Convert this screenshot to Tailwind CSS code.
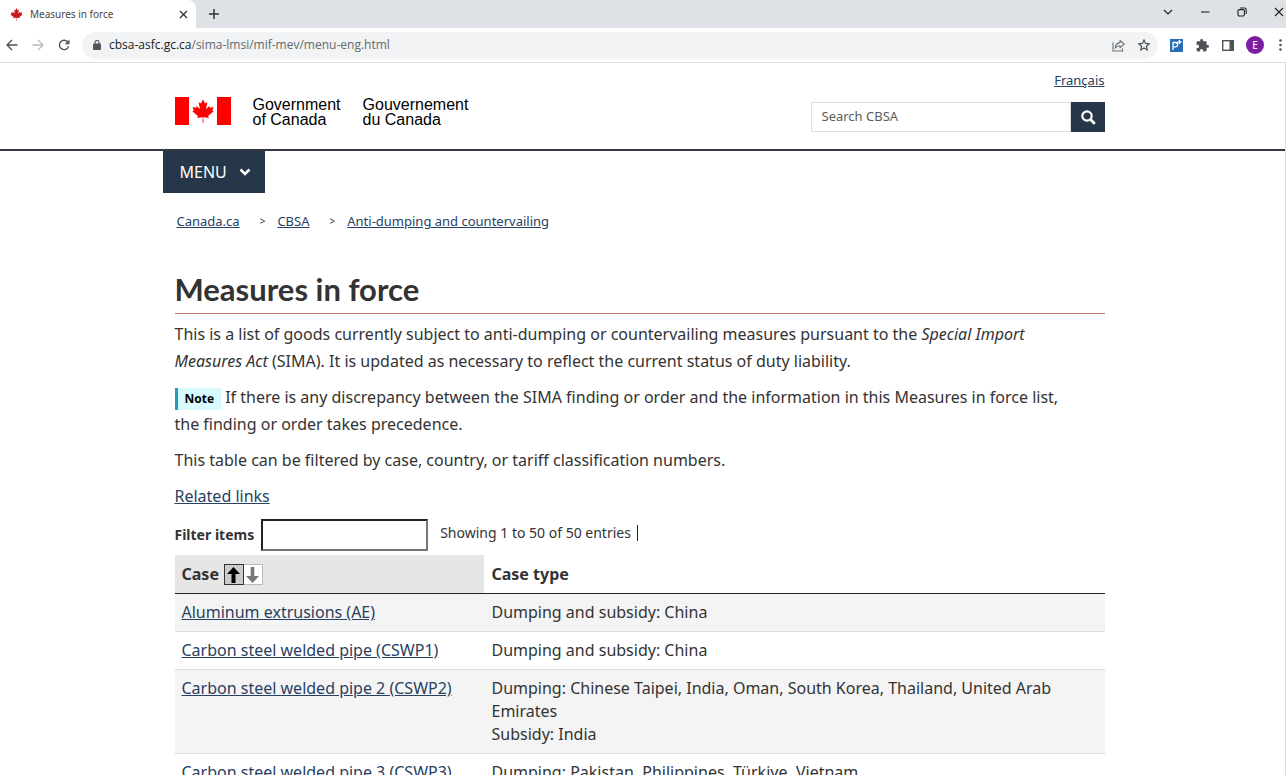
<!DOCTYPE html>
<html lang="en">
<head>
<meta charset="utf-8">
<meta name="viewport" content="width=device-width, initial-scale=1">
<title>Measures in force</title>
<script src="https://cdn.jsdelivr.net/npm/@tailwindcss/browser@4"></script>
</head>
<body class="flex h-screen flex-col overflow-hidden bg-white font-['Noto_Sans',sans-serif] text-[#333]">

<svg class="hidden" aria-hidden="true">
  <symbol id="leaf" viewBox="2900 370 3800 4080"><path d="M4890 4430l-45-863a95 95 0 0 1 111-98l859 151-116-320a65 65 0 0 1 20-73l941-762-212-99a65 65 0 0 1-34-79l186-572-542 115a65 65 0 0 1-73-38l-105-247-423 454a65 65 0 0 1-111-57l204-1052-327 189a65 65 0 0 1-91-27l-332-652-332 652a65 65 0 0 1-91 27l-327-189 204 1052a65 65 0 0 1-111 57l-423-454-105 247a65 65 0 0 1-73 38l-542-115 186 572a65 65 0 0 1-34 79l-212 99 941 762a65 65 0 0 1 20 73l-116 320 859-151a95 95 0 0 1 111 98l-45 863z"/></symbol>
</svg>

<!-- Browser window -->
<div class="shrink-0 border-b border-[#dcdde0]">
  <div class="flex h-7 items-center bg-[#dee1e6] text-[#333]">
    <div class="flex h-7 w-[196px] items-center rounded-tr-lg bg-white pr-1 pl-[10px]">
      <svg class="h-[13px] w-[13px] fill-[#c8191e]" aria-hidden="true"><use href="#leaf"/></svg>
      <span class="ml-[7px] flex-1 text-[10px] text-[#45474a]">Measures in force</span>
      <button class="p-1" aria-label="Close tab"><svg class="size-[9px]" viewBox="0 0 9 9" fill="none" stroke="#333" stroke-width="1.3"><path d="M1 1l7 7M8 1L1 8"/></svg></button>
    </div>
    <button class="ml-3" aria-label="New tab"><svg class="size-3" viewBox="0 0 12 12" fill="none" stroke="#333" stroke-width="1.5"><path d="M6 1v10M1 6h10"/></svg></button>
    <div class="ml-auto flex h-full items-center gap-[27px] pr-0.5 pb-1">
      <button aria-label="Search tabs"><svg class="size-[10px]" viewBox="0 0 10 10" fill="none" stroke="#222" stroke-width="1.2"><path d="M1 3l4 4 4-4"/></svg></button>
      <button aria-label="Minimize"><svg class="size-[10px]" viewBox="0 0 10 10" fill="none" stroke="#222" stroke-width="1.1"><path d="M1 5h8.500"/></svg></button>
      <button aria-label="Restore"><svg class="size-[10px]" viewBox="0 0 10 10" fill="none" stroke="#222" stroke-width="1.1"><rect x="1" y="2.600" width="6.400" height="6.400" rx="1.200"/><path d="M3 1h4.500a1.700 1.700 0 0 1 1.700 1.700V7"/></svg></button>
      <button aria-label="Close"><svg class="size-[10px]" viewBox="0 0 10 10" fill="none" stroke="#222" stroke-width="1.1"><path d="M1 1l8 8M9 1L1 9"/></svg></button>
    </div>
  </div>
  <div class="flex h-[34px] items-center bg-white pl-[6px]">
    <button aria-label="Back"><svg class="size-3" viewBox="0 0 12 12" fill="none" stroke="#505357" stroke-width="1.4"><path d="M11.500 6H1.200M6 1L1 6l5 5"/></svg></button>
    <button class="ml-[14px]" aria-label="Forward"><svg class="size-3" viewBox="0 0 12 12" fill="none" stroke="#b9bbbe" stroke-width="1.300"><path d="M.5 6h10.300M6 1l5 5-5 5"/></svg></button>
    <button class="ml-[14px]" aria-label="Reload"><svg class="size-3" viewBox="0 0 12 12"><path d="M10 3.200A4.700 4.700 0 1 0 10.600 7.400" fill="none" stroke="#505357" stroke-width="1.400"/><path d="M11.500.5v4.800H6.700z" fill="#505357"/></svg></button>
    <div class="ml-3 flex h-[27px] flex-1 items-center rounded-full bg-[#f1f3f4] pr-2 pl-[11px]">
      <svg class="h-[10px] w-2" viewBox="0 0 8 10"><rect y="3.500" width="8" height="6.500" rx="1" fill="#505357"/><path d="M2 4V2.500a2 2 0 0 1 4 0V4" fill="none" stroke="#505357" stroke-width="1.100"/></svg>
      <span class="ml-2 flex-1 font-['Open_Sans',sans-serif] text-xs text-[#66696d]"><span class="text-[#222]">cbsa-asfc.gc.ca</span>/sima-lmsi/mif-mev/menu-eng.html</span>
      <button aria-label="Share"><svg class="size-[13px]" viewBox="0 0 13 13" fill="none" stroke="#6a6d71" stroke-width="1.100"><path d="M1 3.500v8.500h9.500V9.500"/><path d="M8 1.500l4.300 3.700L8 8.800V6.700C5.500 6.700 4.300 7.500 3.200 9.200 3.500 6.200 5 4 8 3.600z" stroke-linejoin="round"/></svg></button>
      <button class="ml-[13px]" aria-label="Bookmark"><svg class="size-3" viewBox="0 0 12 12" fill="none" stroke="#505357" stroke-width="1.200"><path d="M6 1l1.500 3.400 3.700.4-2.800 2.400.8 3.700L6 9l-3.200 1.900.8-3.700L.8 4.800l3.700-.4z"/></svg></button>
    </div>
    <button class="ml-3" aria-label="Extension"><svg class="size-[13px]" viewBox="0 0 13 13"><path d="M0 0h13v13H0z" fill="#2a6cb4"/><path d="M3 11V3.500h2.500a2 2 0 0 1 0 4.300H3M9.500 1v4M7.500 3h4" fill="none" stroke="#fff" stroke-width="1.300"/></svg></button>
    <button class="ml-[13px]" aria-label="Extensions"><svg class="size-[13px]" viewBox="1 1 22 22" fill="#505357"><path d="M20.500 11H19V7c0-1.100-.9-2-2-2h-4V3.500a2.500 2.500 0 0 0-5 0V5H4c-1.100 0-2 .9-2 2v3.800h1.500a2.700 2.700 0 0 1 0 5.400H2V20c0 1.100.9 2 2 2h3.800v-1.500a2.700 2.700 0 0 1 5.400 0V22H17c1.100 0 2-.9 2-2v-4h1.500a2.500 2.500 0 0 0 0-5z"/></svg></button>
    <button class="ml-[13px]" aria-label="Side panel"><svg class="h-[11px] w-3" viewBox="0 0 12 11"><rect x=".7" y=".7" width="10.600" height="9.600" fill="none" stroke="#505357" stroke-width="1.400"/><path d="M7.500 0H12v11H7.500z" fill="#505357"/></svg></button>
    <button class="ml-3 flex size-[18px] items-center justify-center rounded-full bg-[#7b1fa2] text-[10px] text-white">E</button>
    <button class="mr-1 ml-[15px]" aria-label="More"><svg class="h-3 w-[3px]" viewBox="0 0 3 12" fill="#505357"><circle cx="1.500" cy="1.500" r="1.300"/><circle cx="1.500" cy="6" r="1.300"/><circle cx="1.500" cy="10.500" r="1.300"/></svg></button>
  </div>
</div>

<div class="min-h-0 flex-1 overflow-hidden border-r border-[#dcdcdc]">
  <header class="border-b-2 border-[#383745] pr-1.5">
    <div class="mx-auto flex h-[86px] max-w-[930px] justify-between">
      <a href="#" class="flex items-start pt-[34px] font-['Liberation_Sans',sans-serif] text-base leading-[15px] font-normal text-black">
        <svg class="h-7 w-14" viewBox="0 0 56 28" fill="#f00" aria-hidden="true"><path d="M0 0h14v28H0zM42 0h14v28H42z"/><use href="#leaf" x="17" y="2" width="22" height="24"/></svg>
        <span class="ml-[22px]">Government<br>of Canada</span>
        <span class="ml-[22px]">Gouvernement<br>du Canada</span>
      </a>
      <div class="flex flex-col items-end pt-[7px]">
        <a href="#" class="text-[13px] leading-5 text-[#284162] underline">Français</a>
        <form class="mt-3 flex h-[30px]">
          <input type="search" aria-label="Search CBSA" placeholder="Search CBSA" class="w-[260px] border border-[#ddd] px-[10px] text-[13px] placeholder:text-[#5c5c5c]">
          <button type="button" class="flex w-[34px] items-center justify-center bg-[#26374a]" aria-label="Search"><svg class="size-4" viewBox="0 0 16 16" fill="none" stroke="#fff"><circle cx="7" cy="7" r="4.700" stroke-width="2.200"/><path d="M10.500 10.500l3.500 3.500" stroke-width="2.800" stroke-linecap="round"/></svg></button>
        </form>
      </div>
    </div>
  </header>

  <div class="pr-1.5">
    <div class="mx-auto max-w-[930px]">
      <nav>
        <button class="-ml-3 flex h-[42px] w-[102px] items-center bg-[#26374a] pl-[17px] text-base text-white">MENU<svg class="ml-3 h-2 w-3" viewBox="0 0 12 8" fill="none" stroke="#fff" stroke-width="2.600"><path d="M1.500 1.500L6 6l4.500-4.500"/></svg></button>
        <ol class="mt-[18px] flex items-center pl-[2px] text-[13px] leading-5 text-[#284162]">
          <li><a href="#" class="underline">Canada.ca</a></li>
          <li class="flex items-center"><span class="mr-3 ml-5 text-[10px] text-[#333]">&gt;</span><a href="#" class="underline">CBSA</a></li>
          <li class="flex items-center"><span class="mr-3 ml-5 text-[10px] text-[#333]">&gt;</span><a href="#" class="underline">Anti-dumping and countervailing</a></li>
        </ol>
      </nav>
      <main class="text-base leading-[27px]">
        <h1 class="mt-[39px] border-b border-[#c4716f] pb-1 font-['Lato',sans-serif] text-[31px] leading-[39px] font-bold">Measures in force</h1>
        <p class="mt-[7px] pr-6">This is a list of goods currently subject to anti-dumping or countervailing measures pursuant to the <i>Special Import Measures Act</i> (SIMA). It is updated as necessary to reflect the current status of duty liability.</p>
        <p class="mt-[9px] pr-6"><span class="mr-1 inline-block border-l-3 border-[#269abc] bg-[#d7faff] px-[7px] text-xs leading-[22px] font-bold text-black">Note</span>If there is any discrepancy between the SIMA finding or order and the information in this Measures in force list, the finding or order takes precedence.</p>
        <p class="mt-[9px]">This table can be filtered by case, country, or tariff classification numbers.</p>
        <p class="mt-[9px]"><a href="#" class="text-[#284162] underline">Related links</a></p>
        <div class="mt-[9px] flex h-8 items-center">
          <label for="filter" class="text-sm font-bold">Filter items</label>
          <input id="filter" type="text" class="ml-[7px] h-8 w-[167px] border-2 border-t-[#222] border-r-[#777] border-b-[#777] border-l-[#222] px-2 text-sm">
          <span class="ml-3 pb-1 text-sm leading-5">Showing 1 to 50 of 50 entries</span>
          <span class="mb-1 ml-1.5 h-4 w-px bg-[#222]"></span>
        </div>
        <table class="mt-1 w-full table-fixed border-collapse text-left align-top leading-[23px]">
          <colgroup><col class="w-1/3"><col></colgroup>
          <thead>
            <tr class="border-b border-[#222]">
              <th scope="col" class="bg-[#e6e6e6] px-[7px] pt-2 pb-[7px]"><div class="flex items-center">Case
                <button class="ml-[5px] flex h-[21px] w-5 items-center justify-center border border-[#333] bg-[#ccc]" aria-label="Sort ascending"><svg class="h-4 w-[13px]" viewBox="0 0 13 16"><path d="M6.500 0L13 7H8.500v9h-4V7H0z"/></svg></button>
                <button class="flex h-[21px] w-[19px] items-center justify-center border border-l-0 border-[#bbb] bg-white" aria-label="Sort descending"><svg class="h-4 w-[13px]" viewBox="0 0 13 16" fill="#777"><path d="M6.500 16L0 9h4.700V0h3.600v9H13z"/></svg></button></div></th>
              <th scope="col" class="px-[7px] py-[7px]">Case type</th>
            </tr>
          </thead>
          <tbody>
            <tr class="border-b border-[#ddd] bg-[#f4f4f4] align-top">
              <td class="px-[7px] py-[7px]"><a href="#" class="text-[#284162] underline">Aluminum extrusions (AE)</a></td>
              <td class="px-[7px] py-[7px]">Dumping and subsidy: China</td>
            </tr>
            <tr class="border-b border-[#ddd] align-top">
              <td class="px-[7px] py-[7px]"><a href="#" class="text-[#284162] underline">Carbon steel welded pipe (CSWP1)</a></td>
              <td class="px-[7px] py-[7px]">Dumping and subsidy: China</td>
            </tr>
            <tr class="border-b border-[#ddd] bg-[#f4f4f4] align-top">
              <td class="px-[7px] py-[7px]"><a href="#" class="text-[#284162] underline">Carbon steel welded pipe 2 (CSWP2)</a></td>
              <td class="px-[7px] py-[7px]">Dumping: Chinese Taipei, India, Oman, South Korea, Thailand, United Arab Emirates<br>Subsidy: India</td>
            </tr>
            <tr class="border-b border-[#ddd] align-top">
              <td class="px-[7px] py-[7px]"><a href="#" class="text-[#284162] underline">Carbon steel welded pipe 3 (CSWP3)</a></td>
              <td class="px-[7px] py-[7px]">Dumping: Pakistan, Philippines, Türkiye, Vietnam</td>
            </tr>
          </tbody>
        </table>
      </main>
    </div>
  </div>
</div>
</body>
</html>
